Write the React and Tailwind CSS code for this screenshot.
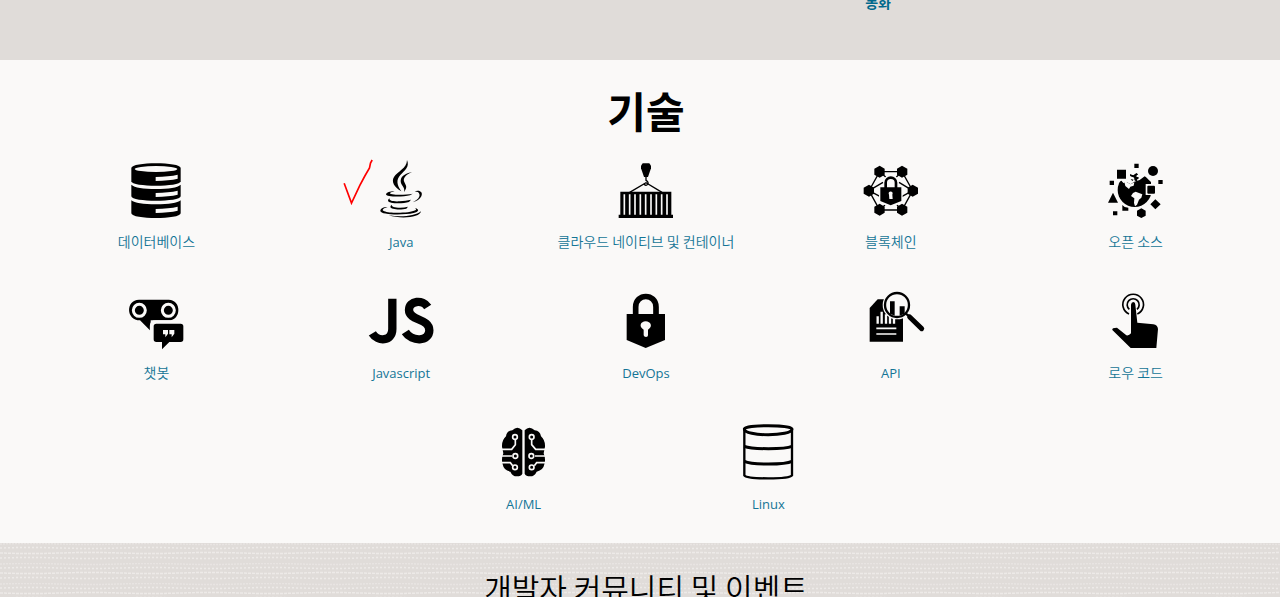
import React from "react";

const Icon = ({ box, children }) => (
  <svg viewBox={box} className="size-16 overflow-visible" aria-hidden="true">
    {children}
  </svg>
);

const DatabaseIcon = () => (
  <Icon box="73 24 192 192">
    <path d="M95 54C95 35 243 35 243 54V94C243 112 95 112 95 94Z" />
    <ellipse cx="169" cy="57" rx="64" ry="9" fill="#faf9f8" />
    <path d="M95 104Q110 117 169 117T243 104V139C243 157 95 157 95 139Z" />
    <path d="M95 151Q110 163 169 163T243 151V190C243 209 95 209 95 190Z" />
    <g fill="#faf9f8">
      <path d="M168 81Q208 80 234 74V86Q208 92 168 93Z" />
      <path d="M168 129Q208 128 234 122V134Q208 140 168 141Z" />
      <path d="M168 177Q208 176 234 170V182Q208 188 168 189Z" />
    </g>
  </Icon>
);

const JavaIcon = () => (
  <Icon box="102 24 192 192">
    <path d="M216 30C225 51 208 62 196 75C184 88 184 103 199 124C178 111 168 96 177 81C187 65 216 55 216 30Z" />
    <path d="M231 67C214 73 204 84 207 94C211 106 220 109 207 126C212 111 196 106 197 92C198 76 217 69 231 67Z" />
    <path d="M179 124C165 127 160 131 172 133C190 136 217 134 233 131L225 136C202 142 152 141 153 133C154 127 169 123 179 124Z" />
    <path d="M237 125C253 118 265 126 259 139C255 148 245 154 233 157C249 149 256 140 253 132C251 126 245 124 237 125Z" />
    <path d="M164 145C161 152 172 155 194 154Q213 153 228 149L222 156C202 162 160 161 159 152Q159 148 164 145Z" />
    <path d="M171 164C168 170 179 173 195 173Q208 173 219 170L214 176C199 180 167 179 166 171Q166 166 171 164Z" />
    <path d="M158 171C145 175 138 180 148 184C164 191 225 190 241 181Q246 178 240 174C255 178 251 186 236 189C205 196 137 195 136 183C136 174 150 170 158 171Z" />
    <path d="M161 196C196 202 240 199 258 184C257 202 199 208 161 196Z" />
  </Icon>
);

const ContainerIcon = () => (
  <Icon box="72 24 192 192">
    <path d="M153 47L158 40H178L183 47V55L174 81H162L153 55Z" />
    <path d="M168 79V91Q177 96 173 103Q168 109 161 102" fill="none" stroke="#000" strokeWidth="4" />
    <path d="M119 127L168 98L216 127" fill="none" stroke="#000" strokeWidth="4" />
    <path d="M91 125H244V194H249V204H86V194H91Z" />
    <path d="M103 133V194M119 133V194M135 133V194M151 133V194M167 133V194M183 133V194M199 133V194M215 133V194M231 133V194" stroke="#faf9f8" strokeWidth="5" />
  </Icon>
);

const BlockchainIcon = () => (
  <Icon box="56 24 192 192">
    <path d="M118 65H185L217 122L185 180H118L86 122ZM86 122L128 97M86 122L120 140M217 122L176 97M217 122L184 140M118 180L134 165M185 180L170 165M118 65L136 81M185 65L168 81" fill="none" stroke="#000" strokeWidth="4" />
    <path d="M118 47L133 56V74L118 83L102 74V56ZM185 47L201 56V74L185 83L170 74V56ZM86 104L101 113V131L86 140L70 131V113ZM217 104L233 113V131L217 140L202 131V113ZM118 161L133 170V188L118 197L102 188V170ZM185 161L201 170V188L185 197L170 188V170Z" />
    <path d="M151 75Q132 75 130 98V108H116V158L151 171L187 158V108H174V98Q172 75 151 75Z" fill="#faf9f8" />
    <path d="M136 115V98C136 78 167 78 167 98V115" fill="none" stroke="#000" strokeWidth="8" />
    <path d="M120 112H183V153L151 166L120 153Z" />
    <path d="M146 134C140 121 162 121 156 134L157 147H147Z" fill="#faf9f8" />
  </Icon>
);

const OpenSourceIcon = () => (
  <Icon box="57 24 192 192">
    <circle cx="149" cy="120" r="51" />
    <path d="M98 98L109 92L115 99L125 96L137 103L148 95L164 90L180 78L184 58H96Z" fill="#faf9f8" />
    <path d="M110 92C95 112 99 136 111 150L142 124L133 115L116 110Z" />
    <path d="M134 119Q132 112 139 113L141 118L147 113L144 109L157 105L165 97L181 80L198 96V123L186 129L169 127L145 129Z" />
    <path d="M135 73L145 76L154 70L159 73L151 79L162 83L155 89L158 95L149 91L148 82L136 78ZM137 87L146 89L142 93Z" />
    <path d="M116 88L126 97L137 103L148 97L146 107L136 110L132 117L121 108Z" fill="#faf9f8" />
    <path d="M135 73L145 77L154 70L159 73L152 79L162 84L155 89L158 95L149 91L148 83L136 78Z" />
    <path d="M144 129L152 125L172 133L169 143L162 149L156 164L150 169L147 159L148 145L138 138Z" fill="#faf9f8" />
    <path d="M182 102H214V135H182Z" fill="#faf9f8" />
    <rect x="187" y="107" width="23" height="24" rx="3" />
    <path d="M148 41H161V54H148ZM96 59H123V86H96ZM74 92H87V105H74ZM220 90H233V102H220ZM84 184H97V196H84ZM84 128L99 158H69ZM211 148L227 163L211 178L196 163ZM169 175L182 182V197L169 204L156 197V182ZM112 165L119 171L130 173V182H112Z" />
    <circle cx="204" cy="63" r="15" />
  </Icon>
);

const ChatbotIcon = () => (
  <Icon box="73 12 192 192">
    <path d="M118 44H207C246 44 246 106 207 106H153V138L121 106C78 106 78 44 118 44Z" />
    <path d="M153 141V123Q153 108 168 108H225" fill="none" stroke="#faf9f8" strokeWidth="5" />
    <circle cx="119" cy="76" r="18" fill="none" stroke="#faf9f8" strokeWidth="9" />
    <circle cx="206" cy="76" r="18" fill="none" stroke="#faf9f8" strokeWidth="9" />
    <path d="M170 116H243Q251 116 251 124V163Q251 171 243 171H209L187 193V171H170Q162 171 162 163V124Q162 116 170 116Z" />
    <path d="M190 135H205V146L197 157V148H190ZM209 135H224V146L216 157V148H209Z" fill="#faf9f8" />
  </Icon>
);

const JavascriptIcon = () => (
  <Icon box="56 12 192 192">
    <path d="M126 41V132C126 170 82 171 66 145M232 66C218 43 176 46 176 75C176 108 237 99 237 136C237 171 184 171 165 141" fill="none" stroke="#000" strokeWidth="25" />
  </Icon>
);

const LockIcon = () => (
  <Icon box="72 12 192 192">
    <path d="M137 90V66C137 24 198 24 198 66V90" fill="none" stroke="#000" strokeWidth="17" />
    <path d="M110 87H225V165L167 189L110 165Z" />
    <path d="M161 134C145 125 152 109 167 109S190 125 174 134V151Q174 156 168 156T161 151Z" fill="#faf9f8" />
  </Icon>
);

const ApiIcon = () => (
  <Icon box="56 12 192 192">
    <path d="M112 43H188V170H88V69Z" />
    <path d="M112 116V94M124 116V80M137 116V88M149 116V93M161 116V101" stroke="#faf9f8" strokeWidth="7" />
    <path d="M108 130H168M108 147H168" stroke="#faf9f8" strokeWidth="5" />
    <circle cx="170" cy="60" r="43" fill="#faf9f8" />
    <circle cx="170" cy="60" r="36" fill="#faf9f8" stroke="#000" strokeWidth="7" />
    <path d="M149 49H163V92L149 86ZM178 64H193V86L178 92Z" />
    <path d="M195 85L206 93" stroke="#000" strokeWidth="7" />
    <path d="M208 96L244 131" stroke="#000" strokeWidth="15" strokeLinecap="round" />
  </Icon>
);

const TouchIcon = () => (
  <Icon box="57 12 192 192">
    <path d="M132 87A31 31 0 1 1 157 87M133 73A18 18 0 1 1 156 73" fill="none" stroke="#000" strokeWidth="5" />
    <path d="M138 59Q139 51 145 51T151 59L157 113L205 118Q218 120 219 132L214 189H137L82 135Q80 128 96 128L124 151Q132 153 138 145Z" />
  </Icon>
);

const BrainIcon = () => (
  <Icon box="36 12 192 192">
    <path d="M127 43Q112 28 97 43Q80 44 78 61Q65 73 66 92L70 112Q63 130 68 145Q71 163 91 167Q97 181 111 181Q123 181 127 173ZM134 43Q148 28 164 43Q180 44 183 61Q196 73 195 92L191 112Q198 130 193 145Q190 163 170 167Q164 181 150 181Q138 181 134 173Z" />
    <g fill="none" stroke="#faf9f8" strokeWidth="5">
      <path d="M106 72V86L95 100H65M96 120H65M98 149L91 140H65M155 72V86L167 100H196M165 120H196M163 149L170 140H196" />
      <circle cx="105" cy="63" r="7" />
      <circle cx="106" cy="120" r="7" />
      <circle cx="105" cy="154" r="7" />
      <circle cx="155" cy="63" r="7" />
      <circle cx="154" cy="120" r="7" />
      <circle cx="155" cy="154" r="7" />
    </g>
  </Icon>
);

const LinuxIcon = () => (
  <Icon box="768 12 192 192">
    <g fill="none" stroke="#000">
      <path d="M793 39V178C800 190 928 190 936 178V39" strokeWidth="7" />
      <path d="M793 39C793 26 936 26 936 39C936 62 793 62 793 39ZM793 91Q810 98 865 98T936 91M793 136Q810 144 865 144T936 136" strokeWidth="9" />
    </g>
  </Icon>
);

const CheckMark = () => (
  <svg viewBox="20 27 93 144" className="absolute -left-7 top-0 h-12 w-8" aria-hidden="true">
    <path d="M28 103L50 162L75 109L90 81L104 57L107 42L112 33" fill="none" stroke="#f00" strokeWidth="5" />
  </svg>
);

const korean = "text-sm leading-6 font-[350]";
const latin = "font-['Open_Sans','Noto_Sans_CJK_KR',sans-serif] text-[13px] leading-[26px]";

const technologies = [
  { label: "데이터베이스", type: korean, Art: DatabaseIcon },
  { label: "Java", type: latin, Art: JavaIcon, checked: true },
  { label: "클라우드 네이티브 및 컨테이너", type: korean, Art: ContainerIcon },
  { label: "블록체인", type: korean, Art: BlockchainIcon },
  { label: "오픈 소스", type: korean, Art: OpenSourceIcon },
  { label: "챗봇", type: korean, Art: ChatbotIcon },
  { label: "Javascript", type: latin, Art: JavascriptIcon },
  { label: "DevOps", type: latin, Art: LockIcon },
  { label: "API", type: latin, Art: ApiIcon },
  { label: "로우 코드", type: korean, Art: TouchIcon },
  { label: "AI/ML", type: latin, Art: BrainIcon },
  { label: "Linux", type: latin, Art: LinuxIcon },
];

const Texture = () => (
  <svg className="absolute inset-0 size-full" aria-hidden="true">
    <defs>
      <pattern id="weave" width="120" height="20" patternUnits="userSpaceOnUse">
        <g fill="none" stroke="#edeae8" strokeWidth="1.5">
          <path d="M0 1Q30 0 60 1T120 1" strokeDasharray="2 1" opacity=".6" />
          <path d="M0 5Q30 4 60 5T120 5" strokeDasharray="2 2" />
          <path d="M0 10Q30 11 60 10T120 10" strokeDasharray="3 1" />
          <path d="M0 15Q30 14 60 15T120 15" strokeDasharray="2 2" />
        </g>
      </pattern>
    </defs>
    <rect width="100%" height="100%" fill="url(#weave)" />
  </svg>
);

export default function App() {
  return (
    <div className="overflow-hidden bg-[#faf9f8] font-['Noto_Sans_CJK_KR','Noto_Sans',sans-serif] text-black">
      <section className="flex h-15 justify-end overflow-hidden bg-[#e0dcd9] pr-[389px]">
        <a href="#automation" className="-mt-2.5 text-sm leading-6 font-bold text-[#00688c]">
          동화
        </a>
      </section>

      <main className="pt-[22px] pr-[22px] pb-[26px] pl-[34px]">
        <h2 className="text-center text-[42px] leading-14 font-bold">기술</h2>
        <ul className="mt-5 flex flex-wrap justify-center gap-y-[34px]">
          {technologies.map(({ label, type, Art, checked }) => (
            <li key={label} className="flex w-1/5 justify-center">
              <a href={"#" + label} className="relative flex flex-col items-center text-[#147596]">
                <Art />
                {checked && <CheckMark />}
                <span className={"mt-[7px] whitespace-nowrap " + type}>{label}</span>
              </a>
            </li>
          ))}
        </ul>
      </main>

      <section className="relative bg-[#e0dcd9] pt-5 pr-[22px] pb-8 pl-[34px]">
        <Texture />
        <h2 className="relative text-center text-[30px] leading-12 font-[350]">개발자 커뮤니티 및 이벤트</h2>
      </section>
    </div>
  );
}
